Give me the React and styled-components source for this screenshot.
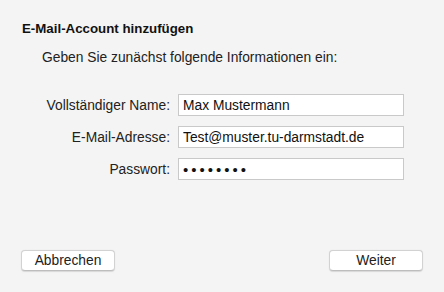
import React from "react";
import styled, { createGlobalStyle } from "styled-components";

const GlobalStyle = createGlobalStyle`
  html, body {
    margin: 0;
    padding: 0;
    background: #f4f4f4;
  }
  body {
    font-family: "Liberation Sans", Arial, sans-serif;
    color: #1a1a1a;
  }
`;

const Sheet = styled.div`
  width: 444px;
  height: 292px;
  box-sizing: border-box;
  background: #f4f4f4;
  padding: 21px 21px 0 20px;
  display: flex;
  flex-direction: column;
`;

const Title = styled.h1`
  margin: 0 0 0 2px;
  font-size: 13.3px;
  font-weight: bold;
  line-height: 16px;
  color: #111;
`;

const Intro = styled.p`
  margin: 13px 0 0 22px;
  font-size: 13.8px;
  line-height: 16px;
  color: #222;
`;

const Form = styled.div`
  margin-top: 28px;
  display: grid;
  grid-template-columns: 150px 226px;
  column-gap: 8px;
  row-gap: 10px;
  align-items: center;
`;

const Label = styled.label`
  text-align: right;
  font-size: 13.8px;
  color: #222;
`;

const Field = styled.input`
  box-sizing: border-box;
  height: 22px;
  width: 226px;
  margin: 0;
  padding: 1px 4px 0 4px;
  border: 1px solid #c9c9c9;
  background: #fff;
  font-family: "Liberation Sans", Arial, sans-serif;
  font-size: ${(p) => (p.type === "password" ? "15px" : "13.8px")};
  color: #111;
  outline: none;
  letter-spacing: ${(p) => (p.type === "password" ? "3px" : "normal")};
`;

const Footer = styled.div`
  margin-top: auto;
  margin-bottom: 21px;
  display: flex;
  justify-content: space-between;
  padding-left: 1px;
`;

const Button = styled.button`
  box-sizing: border-box;
  width: 94px;
  height: 21px;
  padding: 0;
  border: 1px solid #d2d2d2;
  border-bottom-color: #bdbdbd;
  border-radius: 4px;
  background: #fff;
  box-shadow: 0 0.5px 1px rgba(0, 0, 0, 0.12);
  font-family: "Liberation Sans", Arial, sans-serif;
  font-size: 13.8px;
  color: #222;
`;

export default function App() {
  return (
    <Sheet>
      <GlobalStyle />
      <Title>E-Mail-Account hinzufügen</Title>
      <Intro>Geben Sie zunächst folgende Informationen ein:</Intro>
      <Form>
        <Label>Vollständiger Name:</Label>
        <Field readOnly defaultValue="Max Mustermann" />
        <Label>E-Mail-Adresse:</Label>
        <Field readOnly defaultValue="Test@muster.tu-darmstadt.de" />
        <Label>Passwort:</Label>
        <Field readOnly type="password" defaultValue="geheim12" />
      </Form>
      <Footer>
        <Button>Abbrechen</Button>
        <Button>Weiter</Button>
      </Footer>
    </Sheet>
  );
}
